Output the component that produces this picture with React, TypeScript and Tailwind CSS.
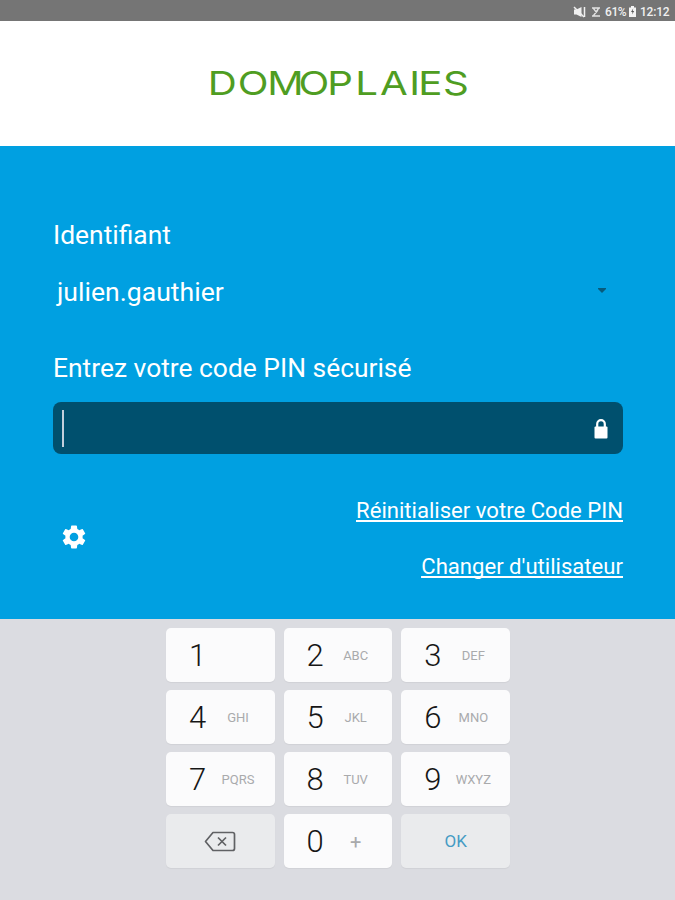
const keys = [
  { digit: "1", letters: "" },
  { digit: "2", letters: "ABC" },
  { digit: "3", letters: "DEF" },
  { digit: "4", letters: "GHI" },
  { digit: "5", letters: "JKL" },
  { digit: "6", letters: "MNO" },
  { digit: "7", letters: "PQRS" },
  { digit: "8", letters: "TUV" },
  { digit: "9", letters: "WXYZ" },
];

function StatusBar() {
  return (
    <div className="flex h-[21px] items-center justify-end bg-[#757575] pr-[5px] pt-[2px] text-[12px] leading-none text-[#f0f0f0]">
      {/* Muted speaker */}
      <svg width="13" height="12" viewBox="0 0 13 12" className="mr-[6px]">
        <path d="M1 3.500h2.500L8.500 1v10L3.500 8.500H1z" fill="#f0f0f0" />
        <path d="M1 1l10 10" stroke="#f0f0f0" strokeWidth="1.500" />
        <path d="M11.500 1v10" stroke="#f0f0f0" strokeWidth="1.500" />
      </svg>
      {/* Hourglass-like sync mark */}
      <svg width="8" height="10" viewBox="0 0 8 10" className="mr-[5px]">
        <path d="M0 1h8M0 9h8M1.500 1.500L4 5l2.500-3.500M1.500 8.500L6 3" stroke="#e2e2e2" strokeWidth="1.300" fill="none" />
      </svg>
      <span className="w-[23px] font-medium tracking-[-0.4px]">61%</span>
      <svg width="7" height="11" viewBox="0 0 7 11" className="ml-px mr-[4px]">
        <path d="M2 0h3v1.500h2V11H0V1.500h2z" fill="#f4f4f4" />
        <path d="M4.200 2.500L2 6h1.500L3 8.500 5.200 5H3.700z" fill="#555" />
      </svg>
      <span className="w-[30px] font-medium tracking-[-0.2px]">12:12</span>
    </div>
  );
}

function Logo() {
  return (
    <svg width="260" height="48" viewBox="0 0 260 48" className="overflow-visible">
      {/* Wide lettering, each letter on its own start position */}
      <text
        x="-0.300 24.300 48.500 74.200 97.700 120.600 141 165 172.300 192.600"
        y="35"
        transform="scale(1.22 1)"
        fill="#4f9d22"
        className="font-['Inter',sans-serif] text-[33px]"
      >
        DOMOPLAIES
      </text>
    </svg>
  );
}

function Key({ digit, letters }: { digit: string; letters: string }) {
  return (
    <button className="flex items-center rounded-[5px] bg-[#fbfbfc] pl-[12px] pt-px shadow-[0_1px_1px_rgba(0,0,0,0.05)]">
      <span className="w-[39px] text-center text-[31px] font-light leading-none text-[#161616]">{digit}</span>
      <span className={`${letters === "+" ? "text-[20px]" : "text-[13px]"} w-[42px] text-center leading-none text-[#a9aaac]`}>
        {letters}
      </span>
    </button>
  );
}

function Keypad() {
  return (
    <div className="flex flex-1 justify-center bg-[#dbdce1] pt-[9px]">
      <div className="ml-px grid h-[240px] w-[344px] grid-cols-3 grid-rows-4 gap-x-[9px] gap-y-[8.500px]">
        {keys.map((k) => (
          <Key key={k.digit} digit={k.digit} letters={k.letters} />
        ))}
        <button className="flex items-center justify-center rounded-[5px] bg-[#eaebed] shadow-[0_1px_1px_rgba(0,0,0,0.05)]">
          <svg width="32" height="21" viewBox="0 0 32 21" fill="none" stroke="#606164" strokeWidth="1.700">
            <path d="M9 1.500h19.500a2 2 0 0 1 2 2v14a2 2 0 0 1-2 2H9L1.500 10.500z" strokeLinejoin="round" />
            <path d="M14 6.500l8 8M22 6.500l-8 8" />
          </svg>
        </button>
        <Key digit="0" letters="+" />
        <button className="flex items-center justify-center rounded-[5px] bg-[#eaebed] pt-[2px] text-[17px] text-[#459bc4] shadow-[0_1px_1px_rgba(0,0,0,0.05)]">
          OK
        </button>
      </div>
    </div>
  );
}

export default function App() {
  return (
    <div className="flex h-[900px] w-[675px] flex-col overflow-hidden bg-white font-['Roboto',sans-serif]">
      <StatusBar />
      <header className="flex h-[125px] items-center justify-center bg-white">
        <Logo />
      </header>

      <main className="flex h-[473px] flex-col bg-[#00a0e1] pl-[53px] pr-[52px] pt-[73px] text-white">
        <label className="h-8 text-[26.400px] leading-8">Identifiant</label>
        <div className="mt-[25px] flex h-8 items-center justify-between pl-1 pr-[17px] text-[26.600px] leading-8">
          <span>julien.gauthier</span>
          <svg width="8" height="5" viewBox="0 0 8 5" className="mb-[3px]">
            <path d="M0 0h8v1L4 5 0 1z" fill="#075b7c" />
          </svg>
        </div>

        <label className="mt-[44px] h-8 text-[26.400px] leading-8">Entrez votre code PIN sécurisé</label>
        <div className="mt-[18px] flex h-[52px] items-center justify-between rounded-[8px] bg-[#00506e] pl-[9px] pr-[15px]">
          <span className="h-[37px] w-[2px] bg-[#c3cfdc]" />
          <svg width="14" height="20" viewBox="0 0 14 20" className="mt-[2px]">
            <path d="M3.200 9V5a3.800 3.800 0 0 1 7.600 0v4" fill="none" stroke="#fff" strokeWidth="2.200" />
            <rect x="0.500" y="7.500" width="13" height="12" rx="1" fill="#fff" />
          </svg>
        </div>

        <div className="mt-[41px] flex justify-between">
          <svg width="24" height="24" viewBox="2 2 20 20" className="ml-[9px] mt-[30px]">
            <path
              d="M19.140 12.940c.04-.3.060-.61.060-.94 0-.32-.02-.64-.07-.94l2.030-1.580a.49.49 0 0 0 .12-.61l-1.920-3.320a.488.488 0 0 0-.59-.22l-2.390.96c-.5-.38-1.030-.7-1.620-.94l-.36-2.540a.484.484 0 0 0-.48-.41h-3.840c-.24 0-.43.17-.47.41l-.36 2.540c-.59.24-1.130.57-1.620.94l-2.390-.96a.48.48 0 0 0-.59.22L2.740 8.870c-.12.21-.08.47.12.61l2.030 1.580c-.05.3-.09.63-.09.94s.02.64.07.94l-2.030 1.580a.49.49 0 0 0-.12.61l1.920 3.320c.12.22.37.29.59.22l2.390-.96c.5.38 1.030.7 1.620.94l.36 2.540c.05.24.24.41.48.41h3.840c.24 0 .44-.17.47-.41l.36-2.540c.59-.24 1.130-.56 1.620-.94l2.390.96c.22.08.47 0 .59-.22l1.920-3.320a.48.48 0 0 0-.12-.61zM12 15.600a3.600 3.600 0 1 1 0-7.200 3.600 3.600 0 0 1 0 7.200z"
              fill="#fff"
              fillRule="evenodd"
            />
          </svg>
          <div className="flex flex-col items-end gap-[26px] text-[22.100px] leading-[30px] underline decoration-[1.500px] underline-offset-[2px] [text-decoration-skip-ink:none]">
            <a>Réinitialiser votre Code PIN</a>
            <a>Changer d'utilisateur</a>
          </div>
        </div>
      </main>

      <Keypad />
    </div>
  );
}
